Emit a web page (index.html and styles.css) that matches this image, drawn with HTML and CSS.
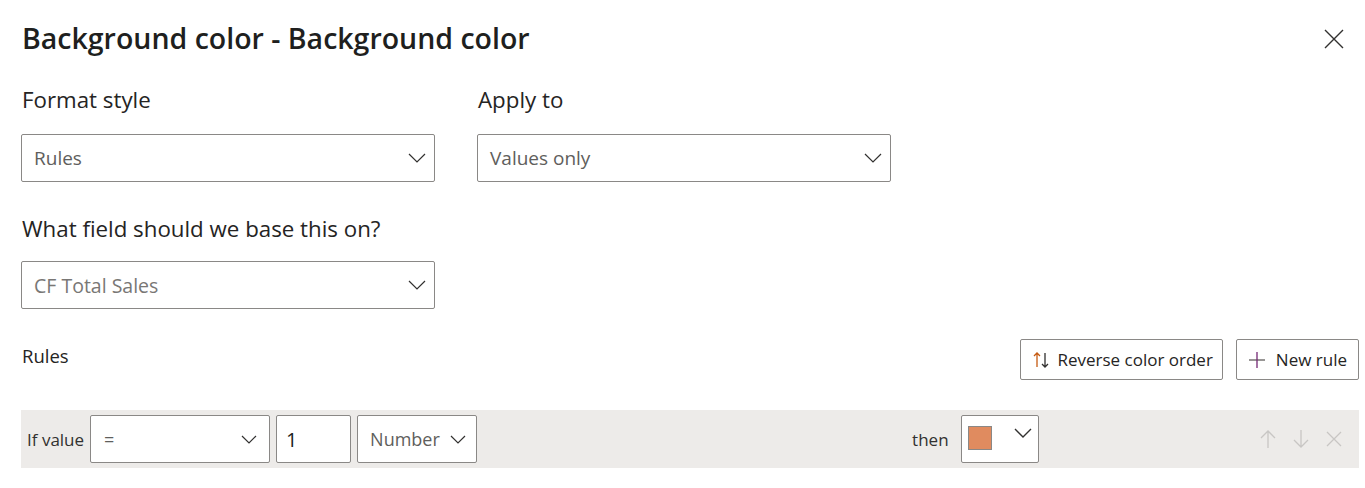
FILE: index.html
```html
<!DOCTYPE html>
<html>
<head>
<meta charset="utf-8">
<link rel="stylesheet" href="styles.css">
</head>
<body>
<div class="dialog">
  <div class="header">
    <h1 class="title">Background color - Background color</h1>
    <button class="close" aria-label="Close">
      <svg width="20" height="20" viewBox="0 0 20 20"><path d="M1 1 L19 19 M19 1 L1 19" stroke="#323130" stroke-width="1.4" fill="none"/></svg>
    </button>
  </div>

  <div class="fields">
    <div class="field">
      <div class="label">Format style</div>
      <div class="select"><span>Rules</span><svg class="chev" width="18" height="10" viewBox="0 0 18 10"><path d="M1 1 L9 9 L17 1" stroke="#323130" stroke-width="1.2" fill="none"/></svg></div>
    </div>
    <div class="field">
      <div class="label">Apply to</div>
      <div class="select"><span>Values only</span><svg class="chev" width="18" height="10" viewBox="0 0 18 10"><path d="M1 1 L9 9 L17 1" stroke="#323130" stroke-width="1.2" fill="none"/></svg></div>
    </div>
  </div>

  <div class="field field-base">
    <div class="label">What field should we base this on?</div>
    <div class="select"><span class="muted">CF Total Sales</span><svg class="chev" width="18" height="10" viewBox="0 0 18 10"><path d="M1 1 L9 9 L17 1" stroke="#323130" stroke-width="1.2" fill="none"/></svg></div>
  </div>

  <div class="rules-head">
    <div class="rules-label">Rules</div>
    <div class="actions">
      <button class="btn btn-rev">
        <svg width="18" height="18" viewBox="0 0 18 18"><path d="M5 16 V2 M2 5 L5 2 L8 5" stroke="#c55a11" stroke-width="1.3" fill="none"/><path d="M13 2 V16 M10 13 L13 16 L16 13" stroke="#323130" stroke-width="1.3" fill="none"/></svg>
        Reverse color order
      </button>
      <button class="btn btn-new">
        <svg width="18" height="18" viewBox="0 0 18 18"><path d="M1 9 H17" stroke="#605e5c" stroke-width="1.3"/><path d="M9 1 V17" stroke="#742774" stroke-width="1.3"/></svg>
        New rule
      </button>
    </div>
  </div>

  <div class="rule-row">
    <span class="row-label">If value</span>
    <div class="ctl op"><span>=</span><svg class="chev" width="16" height="9" viewBox="0 0 16 9"><path d="M1 1 L8 8 L15 1" stroke="#323130" stroke-width="1.2" fill="none"/></svg></div>
    <div class="ctl num"><span>1</span></div>
    <div class="ctl type"><span>Number</span><svg class="chev" width="16" height="9" viewBox="0 0 16 9"><path d="M1 1 L8 8 L15 1" stroke="#323130" stroke-width="1.2" fill="none"/></svg></div>
    <span class="row-label then">then</span>
    <div class="ctl color"><span class="swatch"></span><svg class="chev" width="18" height="10" viewBox="0 0 18 10"><path d="M1 1 L9 9 L17 1" stroke="#323130" stroke-width="1.4" fill="none"/></svg></div>
    <div class="row-icons">
      <svg width="18" height="20" viewBox="0 0 18 20"><path d="M9 19 V2 M2 9 L9 2 L16 9" stroke="#c8c6c4" stroke-width="1.3" fill="none"/></svg>
      <svg width="18" height="20" viewBox="0 0 18 20"><path d="M9 1 V18 M2 11 L9 18 L16 11" stroke="#c8c6c4" stroke-width="1.3" fill="none"/></svg>
      <svg width="18" height="20" viewBox="0 0 18 20"><path d="M2 3 L16 17 M16 3 L2 17" stroke="#c8c6c4" stroke-width="1.3" fill="none"/></svg>
    </div>
  </div>
</div>
</body>
</html>
```

FILE: styles.css
```css
* { box-sizing: border-box; }
html, body { margin: 0; padding: 0; background: #fff; }
body {
  font-family: "Open Sans", "Noto Sans", "Liberation Sans", sans-serif;
  color: #252423;
}
.dialog {
  padding: 16px 6px 0 21px;
  width: 1365px;
}
.header {
  display: flex;
  justify-content: space-between;
  align-items: center;
  height: 44px;
}
.title {
  margin: 0;
  font-size: 28.5px;
  font-weight: 600;
  padding-left: 1px;
  color: #201f1e;
}
.close {
  background: none;
  border: 0;
  padding: 0;
  margin-right: 15px;
  margin-top: 1px;
  display: flex;
}
.fields {
  display: flex;
  gap: 42px;
  margin-top: 24px;
}
.field { width: 414px; }
.label {
  font-size: 22.3px;
  height: 32px;
  line-height: 32px;
  padding-left: 1px;
  color: #252423;
}
.select {
  margin-top: 18px;
  height: 48px;
  border: 1px solid #8a8886;
  border-radius: 2px;
  display: flex;
  align-items: center;
  justify-content: space-between;
  padding: 0 8px 0 12px;
  font-size: 19px;
  color: #605e5c;
}
.select .muted { color: #797775; font-size: 19.5px; }
.field-base { margin-top: 31px; }
.field-base .select { margin-top: 16px; }
.rules-head {
  display: flex;
  justify-content: space-between;
  align-items: flex-start;
  margin-top: 30px;
}
.rules-label {
  font-size: 18.5px;
  padding-left: 1px;
  line-height: 34px;
  color: #252423;
}
.actions { display: flex; gap: 13px; }
.btn {
  height: 41px;
  border: 1px solid #8a8886;
  border-radius: 2px;
  background: #fff;
  font-family: inherit;
  font-size: 17px;
  color: #252423;
  display: flex;
  align-items: center;
  padding: 0;
}
.btn-rev { padding: 0 9px 0 11px; gap: 7px; }
.btn-new { padding: 0 11px 0 11px; gap: 10px; }
.rule-row {
  margin-top: 30px;
  height: 58px;
  width: 1338px;
  background: #edebe9;
  display: flex;
  align-items: center;
  padding: 0 16px 0 6px;
}
.row-label { font-size: 17px; color: #323130; margin-right: 6px; }
.ctl {
  height: 48px;
  background: #fff;
  border: 1px solid #8a8886;
  border-radius: 2px;
  display: flex;
  align-items: center;
  justify-content: space-between;
  font-size: 18px;
  color: #605e5c;
}
.op { width: 180px; padding: 0 12px 0 13px; }
.num { width: 75px; margin-left: 6px; padding-left: 9px; color: #201f1e; font-size: 20px; }
.type { width: 120px; margin-left: 6px; padding: 0 10px 0 12px; }
.then { margin-left: 435px; margin-right: 12px; }
.color { width: 78px; padding: 0 6px 0 6px; align-items: flex-start; }
.swatch {
  width: 24px; height: 24px;
  background: #e08b5f;
  border: 1px solid #8a8886;
  margin-top: 10px;
}
.color .chev { margin-top: 12px; }
.row-icons {
  margin-left: auto;
  display: flex;
  gap: 15px;
  align-items: center;
}
```
